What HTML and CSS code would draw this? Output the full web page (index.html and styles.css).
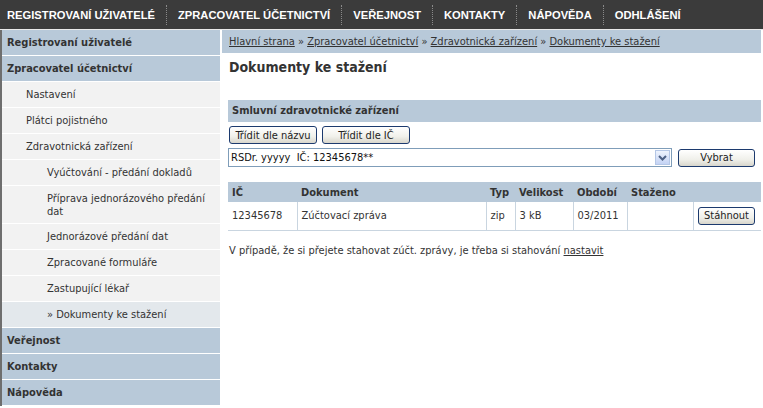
FILE: index.html
```html
<!DOCTYPE html>
<html lang="cs">
  <head>
    <meta charset="utf-8">
    <title>Dokumenty ke stažení</title>
    <link rel="stylesheet" href="styles.css">
  </head>
  <body>
    <div class="topnav">
      <a href="#">Registrovaní uživatelé</a>
      <a href="#">Zpracovatel účetnictví</a>
      <a href="#">Veřejnost</a>
      <a href="#">Kontakty</a>
      <a href="#">Nápověda</a>
      <a href="#">Odhlášení</a>
    </div>
    <div class="layout">
      <ul class="sidebar">
        <li class="top"><a href="#">Registrovaní uživatelé</a></li>
        <li class="top"><a href="#">Zpracovatel účetnictví</a></li>
        <li class="sub"><a href="#">Nastavení</a></li>
        <li class="sub"><a href="#">Plátci pojistného</a></li>
        <li class="sub"><a href="#">Zdravotnická zařízení</a></li>
        <li class="sub2"><a href="#">Vyúčtování - předání dokladů</a></li>
        <li class="sub2 two"><a href="#">Příprava jednorázového předání dat</a></li>
        <li class="sub2"><a href="#">Jednorázové předání dat</a></li>
        <li class="sub2"><a href="#">Zpracované formuláře</a></li>
        <li class="sub2"><a href="#">Zastupující lékař</a></li>
        <li class="sub2 active"><a href="#">» Dokumenty ke stažení</a></li>
        <li class="top"><a href="#">Veřejnost</a></li>
        <li class="top"><a href="#">Kontakty</a></li>
        <li class="top"><a href="#">Nápověda</a></li>
      </ul>
      <div class="main">
        <div class="crumbs">
          <a href="#">Hlavní strana</a> » <a href="#">Zpracovatel účetnictví</a> » <a href="#">Zdravotnická zařízení</a> » <a href="#">Dokumenty ke stažení</a>
        </div>
        <h1>Dokumenty ke stažení</h1>
        <div class="box-head">Smluvní zdravotnické zařízení</div>
        <div class="sort-row">
          <button class="btn sort">Třídit dle názvu</button>
          <button class="btn sort">Třídit dle IČ</button>
        </div>
        <div class="pick-row">
          <div class="select-wrap">
            <select class="select">
              <option>RSDr. yyyyy&nbsp; IČ: 12345678**</option>
            </select>
            <span class="select-arrow">
              <svg width="9" height="6" viewBox="0 0 9 6"><path d="M1 1 L4.5 4.5 L8 1" fill="none" stroke="#4d6185" stroke-width="2"/></svg>
            </span>
          </div>
          <button class="btn pick">Vybrat</button>
        </div>
        <table class="docs">
          <thead>
            <tr>
              <th class="c-ic">IČ</th>
              <th class="c-doc">Dokument</th>
              <th class="c-typ">Typ</th>
              <th class="c-size">Velikost</th>
              <th class="c-per">Období</th>
              <th class="c-dl">Staženo</th>
              <th class="c-btn"></th>
            </tr>
          </thead>
          <tbody>
            <tr>
              <td>12345678</td>
              <td>Zúčtovací zpráva</td>
              <td>zip</td>
              <td>3 kB</td>
              <td>03/2011</td>
              <td></td>
              <td class="c-btn"><button class="btn get">Stáhnout</button></td>
            </tr>
          </tbody>
        </table>
        <p class="note">V případě, že si přejete stahovat zúčt. zprávy, je třeba si stahování <a href="#">nastavit</a></p>
      </div>
    </div>
  </body>
</html>
```

FILE: styles.css
```css
* {
  box-sizing: border-box;
}
body {
  margin: 0;
  background: #fff;
  color: #333;
  font-family: "DejaVu Sans Condensed", Tahoma, sans-serif;
  font-size: 11px;
}
a {
  color: #333;
}

/* top bar */
.topnav {
  display: flex;
  height: 30px;
  align-items: center;
  background: #3b3b3b;
  border-bottom: 1px solid #e8e8e8;
}
.topnav a {
  color: #fff;
  text-decoration: none;
  text-transform: uppercase;
  font-family: "Liberation Sans", Arial, sans-serif;
  font-weight: bold;
  font-size: 11.2px;
  padding: 0 11px 0 7px;
  line-height: 20px;
  white-space: nowrap;
}
.topnav a + a {
  border-left: 1px dotted #8a8a8a;
  padding-left: 11px;
}

/* layout */
.layout {
  display: grid;
  grid-template-columns: 220px 1fr;
  column-gap: 2px;
}

.sidebar {
  list-style: none;
  margin: 0;
  padding: 0;
  border-left: 2px solid #6e6e6e;
}
.sidebar li {
  border-bottom: 1px solid #fff;
}
.sidebar a {
  display: block;
  text-decoration: none;
  line-height: 14px;
  padding-top: 6px;
  padding-bottom: 5px;
}
.sidebar .top {
  background: #b8c9d9;
}
.sidebar .top a {
  font-weight: bold;
  padding-left: 5px;
  padding-right: 5px;
}
.sidebar .sub,
.sidebar .sub2 {
  background: #f2f2f2;
}
.sidebar .sub a {
  padding-left: 24px;
  padding-right: 5px;
}
.sidebar .sub2 a {
  padding-left: 45px;
  padding-right: 10px;
}
.sidebar .two a {
  line-height: 13px;
}
.sidebar .active {
  background: #e3e8ec;
}

.main {
  padding-right: 2px;
}
.crumbs {
  background: #b8c9d9;
  height: 23px;
  line-height: 23px;
  padding-left: 7px;
}
h1 {
  font-size: 14px;
  margin: 5px 0 24px 7px;
  line-height: 18px;
}
.box-head {
  background: #b8c9d9;
  font-weight: bold;
  margin-left: 6px;
  height: 22px;
  line-height: 22px;
  padding-left: 4px;
}

.btn {
  font-family: inherit;
  font-size: 11px;
  color: #222;
  height: 18px;
  padding: 0 4px;
  white-space: nowrap;
  border: 1px solid #1c3a6e;
  border-radius: 3px;
  background: linear-gradient(#ffffff, #f0f0ea 60%, #d8d6cc);
}
.sort-row {
  display: flex;
  gap: 5px;
  margin: 4px 0 4px 7px;
}
.btn.sort {
  width: 88px;
}
.pick-row {
  display: flex;
  gap: 6px;
  margin-left: 6px;
  align-items: center;
}
.select-wrap {
  position: relative;
  width: 444px;
}
.select {
  appearance: none;
  width: 100%;
  height: 19px;
  border: 1px solid #7f9db9;
  background: #fff;
  font-family: inherit;
  font-size: 11px;
  color: #111;
  padding: 0 0 0 2px;
}
.select-arrow {
  position: absolute;
  right: 2px;
  top: 2px;
  width: 15px;
  height: 15px;
  display: flex;
  align-items: center;
  justify-content: center;
  border: 1px solid #b5c7e6;
  background: linear-gradient(#eef3fd, #c4d3f4);
}
.btn.pick {
  width: 77px;
}

.docs {
  margin: 15px 0 0 6px;
  width: calc(100% - 6px);
  border-collapse: collapse;
}
.docs th {
  background: #b8c9d9;
  text-align: left;
  font-weight: bold;
  height: 20px;
  padding: 0 4px;
}
.docs td {
  height: 28px;
  padding: 0 4px;
  border-left: 1px solid #c9d5e0;
  border-bottom: 1px solid #c9d5e0;
}
.docs td:first-child {
  border-left: none;
}
.c-ic { width: 69px; }
.c-doc { width: 189px; }
.c-typ { width: 29px; }
.c-size { width: 58px; }
.c-per { width: 54px; }
.c-dl { width: 66px; }
.docs td.c-btn {
  text-align: right;
  padding-right: 6px;
}
.btn.get {
  width: 57px;
  padding: 0;
}
.note {
  margin: 13px 0 0 7px;
}
```
